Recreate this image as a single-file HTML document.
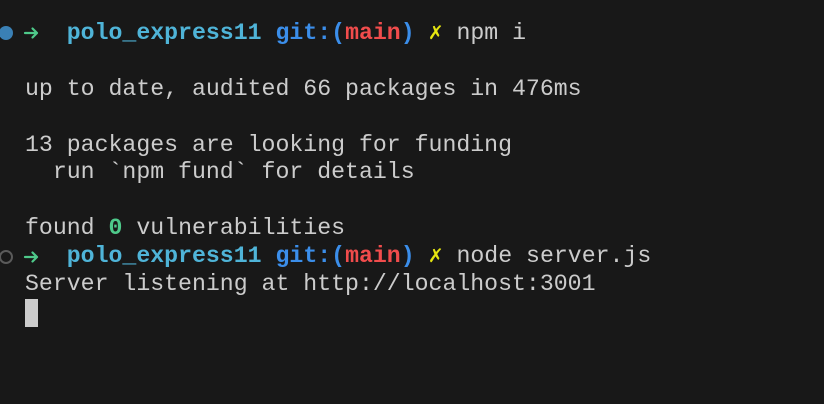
<!DOCTYPE html>
<html><head><style>
html,body{margin:0;padding:0;background:#181818;width:824px;height:404px;overflow:hidden}
.t{position:absolute;left:25px;top:20px;font-family:"Liberation Mono","DejaVu Sans Mono",monospace;font-size:23.2px;line-height:27.9px;color:#cccccc}
.row{height:27.9px;white-space:pre}
.c{color:#4fb4d8;font-weight:bold}
.b{color:#3b8eea;font-weight:bold}
.r{color:#f14c4c;font-weight:bold}
.y{color:#e5e510;font-weight:bold}
.g{color:#4ec98a;font-weight:bold}
.cur{display:inline-block;width:13px;height:28px;background:#cccccc;vertical-align:top;margin-top:0}
svg{position:absolute}
</style></head><body>
<svg style="left:0;top:0" width="824" height="404">
<circle cx="6" cy="33" r="7" fill="#3a80b5"/>
<circle cx="6" cy="257" r="6" fill="none" stroke="#5a5a5a" stroke-width="2"/>
<g stroke="#4ec98a" stroke-width="2.2" fill="none" stroke-linecap="round" stroke-linejoin="round">
<path d="M25 33H37M32.5 28.5L37 33L32.5 37.5"/>
<path d="M25 257H37M32.5 252.5L37 257L32.5 261.5"/>
</g>
</svg>
<div class="t"><div class="row">   <span class="c">polo_express11</span> <span class="b">git:(</span><span class="r">main</span><span class="b">)</span> <span class="y">✗</span> npm i</div><div class="row"> </div><div class="row">up to date, audited 66 packages in 476ms</div><div class="row"> </div><div class="row">13 packages are looking for funding</div><div class="row">  run `npm fund` for details</div><div class="row"> </div><div class="row">found <span class="g">0</span> vulnerabilities</div><div class="row">   <span class="c">polo_express11</span> <span class="b">git:(</span><span class="r">main</span><span class="b">)</span> <span class="y">✗</span> node server.js</div><div class="row">Server listening at http://localhost:3001</div><div class="row"><span class="cur"></span></div></div>
</body></html>
